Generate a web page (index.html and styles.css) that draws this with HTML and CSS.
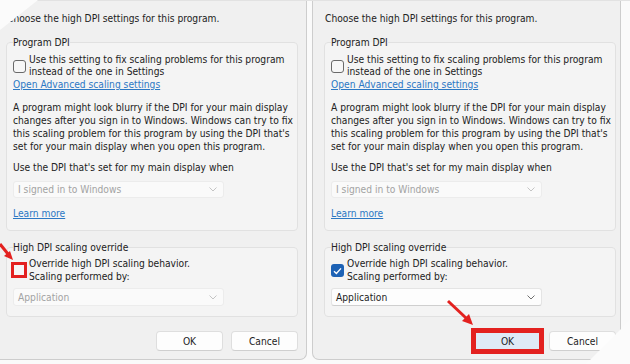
FILE: index.html
```html
<!DOCTYPE html>
<html>
<head>
  <meta charset="utf-8">
  <meta name="viewport" content="width=device-width, initial-scale=1.0">
  <title>high dpi settings</title>
  <link rel="stylesheet" href="styles.css">
</head>
<body>
  <div class="stage">
    <!-- before: override box unticked -->
    <div class="dialog left">
      <div class="intro">Choose the high DPI settings for this program.</div>
      <fieldset class="group">
        <legend>Program DPI</legend>
        <div class="check">
          <span class="box"></span>
          <span>Use this setting to fix scaling problems for this program<br>instead of the one in Settings</span>
        </div>
        <a class="link">Open Advanced scaling settings</a>
        <p class="note">A program might look blurry if the DPI for your main display<br>changes after you sign in to Windows. Windows can try to fix<br>this scaling problem for this program by using the DPI that's<br>set for your main display when you open this program.</p>
        <div class="when">Use the DPI that's set for my main display when</div>
        <div class="select off">
          <span>I signed in to Windows</span>
          <svg width="8" height="5" viewBox="0 0 8 5"><polyline points="0.5,0.5 4,4 7.5,0.5" /></svg>
        </div>
        <a class="link more">Learn more</a>
      </fieldset>
      <fieldset class="group second">
        <legend>High DPI scaling override</legend>
        <div class="check tight">
          <span class="box marked"></span>
          <span>Override high DPI scaling behavior.<br>Scaling performed by:</span>
        </div>
        <div class="select off tall">
          <span>Application</span>
          <svg width="8" height="5" viewBox="0 0 8 5"><polyline points="0.5,0.5 4,4 7.5,0.5" /></svg>
        </div>
      </fieldset>
      <div class="buttons">
        <button>OK</button>
        <button>Cancel</button>
      </div>
    </div>

    <!-- after: override ticked, OK highlighted -->
    <div class="dialog right">
      <div class="intro">Choose the high DPI settings for this program.</div>
      <fieldset class="group">
        <legend>Program DPI</legend>
        <div class="check">
          <span class="box"></span>
          <span>Use this setting to fix scaling problems for this program<br>instead of the one in Settings</span>
        </div>
        <a class="link">Open Advanced scaling settings</a>
        <p class="note">A program might look blurry if the DPI for your main display<br>changes after you sign in to Windows. Windows can try to fix<br>this scaling problem for this program by using the DPI that's<br>set for your main display when you open this program.</p>
        <div class="when">Use the DPI that's set for my main display when</div>
        <div class="select off">
          <span>I signed in to Windows</span>
          <svg width="8" height="5" viewBox="0 0 8 5"><polyline points="0.5,0.5 4,4 7.5,0.5" /></svg>
        </div>
        <a class="link more">Learn more</a>
      </fieldset>
      <fieldset class="group second">
        <legend>High DPI scaling override</legend>
        <div class="check tight">
          <span class="box ticked">
            <svg width="9" height="8" viewBox="0 0 9 8"><polyline points="1,4.2 3.4,6.4 8,1.4" /></svg>
          </span>
          <span>Override high DPI scaling behavior.<br>Scaling performed by:</span>
        </div>
        <div class="select tall">
          <span>Application</span>
          <svg width="8" height="5" viewBox="0 0 8 5"><polyline points="0.5,0.5 4,4 7.5,0.5" /></svg>
        </div>
      </fieldset>
      <div class="buttons">
        <button class="primary">OK</button>
        <button>Cancel</button>
      </div>
    </div>

    <!-- screenshot crop edges -->
    <div class="cut top-left"></div>
    <div class="cut bottom-right"></div>

    <!-- red pointers -->
    <svg class="arrow arrow-left" width="16" height="20" viewBox="0 0 16 20">
      <line x1="0" y1="1" x2="8" y2="11" />
      <polygon points="13,17 4,13 10,8" />
    </svg>
    <svg class="arrow arrow-right" width="30" height="28" viewBox="0 0 30 28">
      <line x1="2" y1="2" x2="20" y2="19" />
      <polygon points="27,26 16,22 23,15" />
    </svg>
  </div>
</body>
</html>
```
FILE: styles.css
```css
* {
  box-sizing: border-box; }

html, body {
  margin: 0;
  height: 100%;
  background: #fafafa; }

body {
  font-family: 'DejaVu Sans Condensed', 'DejaVu Sans', sans-serif;
  font-size: 10.2px;
  line-height: 13px;
  color: #222;
  overflow: hidden; }

.stage {
  position: relative;
  display: flex;
  align-items: flex-start;
  height: 364px;
  border-top: 1px solid #e2e2e2; }

/* dialog panels */
.dialog {
  flex: none;
  background: #f0f0f0;
  border: 1px solid #cdcdcd;
  border-top: none;
  border-radius: 0 0 7px 7px;
  padding: 11px 8px 8px 12px; }
.dialog.left {
  width: 314px;
  margin-left: -7px; }
.dialog.right {
  width: 309px;
  margin-left: 5px;
  padding: 11px 4px 8px 11px; }

.intro {
  padding-left: 1px; }

/* group boxes */
.group {
  margin: 11px 0 0;
  min-width: 0;
  padding: 0 6px 10px;
  border: 1px solid #e1e1e1;
  border-radius: 4px;
  background: #f4f4f4; }
.group.second {
  margin-top: 10px; }
.group legend {
  padding: 0;
  line-height: 13px; }

.check {
  display: flex;
  gap: 3px;
  margin-top: 5px;
  line-height: 12px;
  white-space: nowrap; }
.check.tight {
  margin-top: 4px;
  line-height: 12.5px; }
.box {
  flex: none;
  width: 13px;
  height: 13px;
  margin-top: 6px;
  border: 1px solid #6a6a6a;
  border-radius: 3px;
  background: #f7f7f7; }
.box.marked {
  width: 16px;
  height: 16px;
  margin: 4px -1px 0 -2px;
  border: 3px solid #e3211f;
  border-radius: 0;
  background: #f6f6f6; }
.box.ticked {
  display: flex;
  align-items: center;
  justify-content: center;
  border: none;
  background: #1d62b5; }
.box.ticked polyline {
  fill: none;
  stroke: #fff;
  stroke-width: 1.4; }

.link {
  display: block;
  color: #2c78c4;
  text-decoration: underline; }
.link.more {
  margin-top: 9px; }

.note {
  margin: 10px 0 0;
  white-space: nowrap; }

.when {
  margin-top: 8px; }

/* combo boxes */
.select {
  display: flex;
  align-items: center;
  justify-content: space-between;
  width: 211px;
  height: 17px;
  margin-top: 7px;
  padding: 0 6px 0 4px;
  border: 1px solid #e4e4e4;
  border-radius: 3px;
  background: #fdfdfd;
  color: #1e1e1e; }
.select.tall {
  height: 18px;
  margin-top: 5px;
  border-bottom-color: #cfcfcf; }
.select polyline {
  fill: none;
  stroke: #707070;
  stroke-width: 1; }
.select.off {
  background: #fafafa;
  border-color: #ececec;
  color: #a3a3a3; }
.select.off polyline {
  stroke: #c4c4c4; }

/* buttons */
.buttons {
  display: flex;
  justify-content: flex-end;
  gap: 8px;
  margin-top: 14px; }
.buttons button {
  width: 67px;
  height: 20px;
  padding: 0;
  font: inherit;
  color: #1e1e1e;
  background: #fdfdfd;
  border: 1px solid #dedede;
  border-bottom-color: #cfcfcf;
  border-radius: 4px; }
.buttons button.primary {
  background: #dfeaf6;
  outline: 5px solid #e3211f;
  outline-offset: -2px;
  border-radius: 0; }

/* overlays from the capture */
.cut {
  position: absolute;
  background: #fbfbfb; }
.cut.top-left {
  left: 0; top: -1px;
  width: 38px; height: 30px;
  clip-path: polygon(0 0, 100% 0, 0 100%); }
.cut.bottom-right {
  right: 0; bottom: 0;
  width: 44px; height: 44px;
  clip-path: polygon(100% 0, 100% 100%, 0 100%); }

.arrow {
  position: absolute; }
.arrow line {
  stroke: #e3211f;
  stroke-width: 3; }
.arrow polygon {
  fill: #e3211f; }
.arrow-left {
  left: 0; top: 242px; }
.arrow-right {
  left: 446px; top: 298px; }
```
